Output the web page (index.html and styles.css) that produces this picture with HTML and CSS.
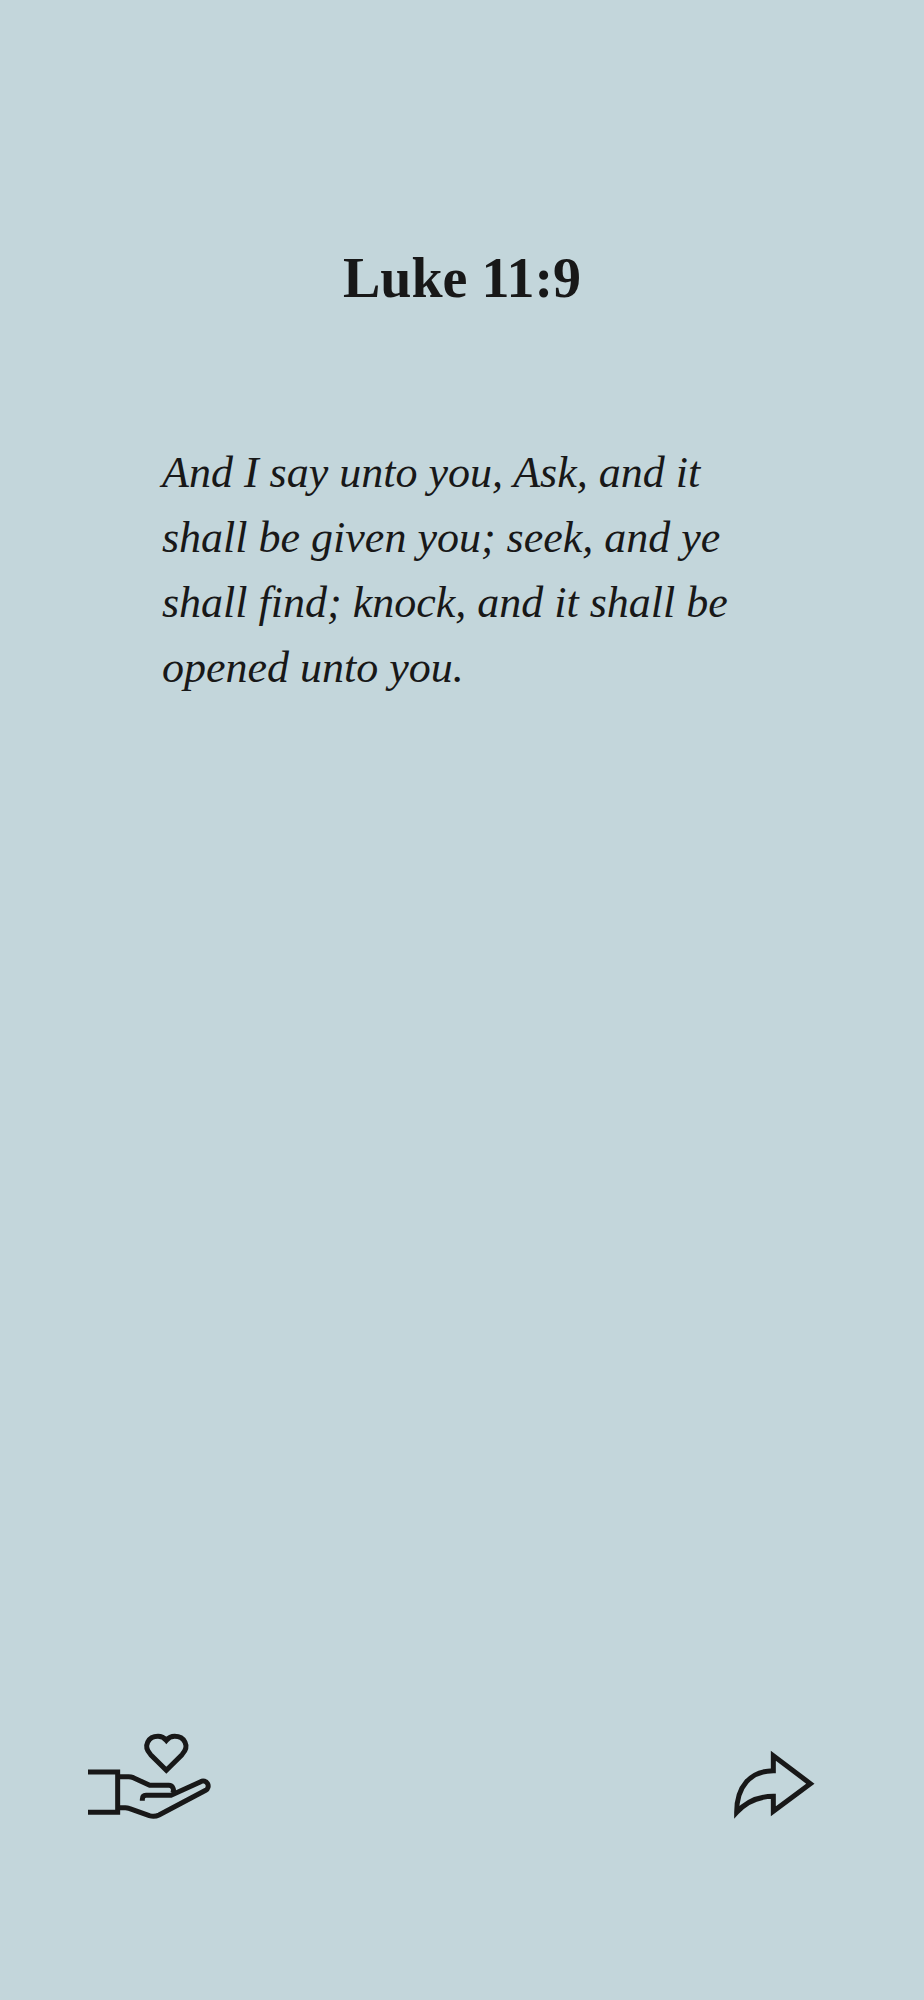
FILE: index.html
```
<!DOCTYPE html>
<html lang="en">
<head>
    <meta charset="UTF-8">
    <meta name="viewport" content="width=device-width, initial-scale=1.0">
    <title>Luke 11:9</title>
    <link rel="stylesheet" href="styles.css">
</head>
<body>
    <main class="verse">
        <h1 class="verse-title">Luke 11:9</h1>
        <p class="verse-text">And I say unto you, Ask, and it<br>shall be given you; seek, and ye<br>shall find; knock, and it shall be<br>opened unto you.</p>
    </main>

    <footer class="actions">
        <button class="action-button" type="button" aria-label="Donate">
            <svg class="icon-give" viewBox="24 40 369 255" aria-hidden="true">
                <path d="M24 154H113V275H24"/>
                <path d="M113 168H146Q153 168 160 171L209 194H266A14 14 0 0 1 277 217"/>
                <path d="M187 240V236Q187 224 198 224H273L362 183A14 14 0 0 1 377 209L237 283Q223 290 208 285L147 263Q142 261 136 261H113"/>
                <path d="M259 149L212 102C187 75 206 47 234 47Q249 47 259 59Q269 47 284 47C312 47 331 75 306 102Z"/>
            </svg>
        </button>
        <button class="action-button" type="button" aria-label="Share">
            <svg class="icon-share" viewBox="42 48 240 204" aria-hidden="true">
                <path d="M160 62V107C91 108 50 154 50 232Q94 184 160 184V229L271 146Z"/>
            </svg>
        </button>
    </footer>
</body>
</html>
```

FILE: styles.css
```
* {
    box-sizing: border-box;
}

body {
    display: flex;
    flex-direction: column;
    min-height: 100vh;
    margin: 0;
    background-color: #C3D6DB;
    color: #181818;
    font-family: Georgia, "Liberation Serif", serif;
}

.verse {
    flex: 1;
    padding: 246px 162px 0;
}

.verse-title {
    margin: 0 0 130px;
    font-size: 56px;
    line-height: 64px;
    text-align: center;
}

.verse-text {
    margin: 0;
    font-size: 44px;
    font-style: italic;
    line-height: 65px;
    white-space: nowrap;
}

.actions {
    display: flex;
    justify-content: space-between;
    align-items: flex-end;
    padding: 0 110px 181px 88px;
}

.action-button {
    display: block;
    padding: 0;
    border: none;
    background: none;
    color: inherit;
    cursor: pointer;
}

.action-button svg {
    display: block;
    overflow: visible;
    fill: none;
    stroke: currentColor;
    stroke-width: 15;
}

.icon-give {
    width: 123px;
    height: 85px;
}

.icon-share {
    width: 80px;
    height: 68px;
}
```
